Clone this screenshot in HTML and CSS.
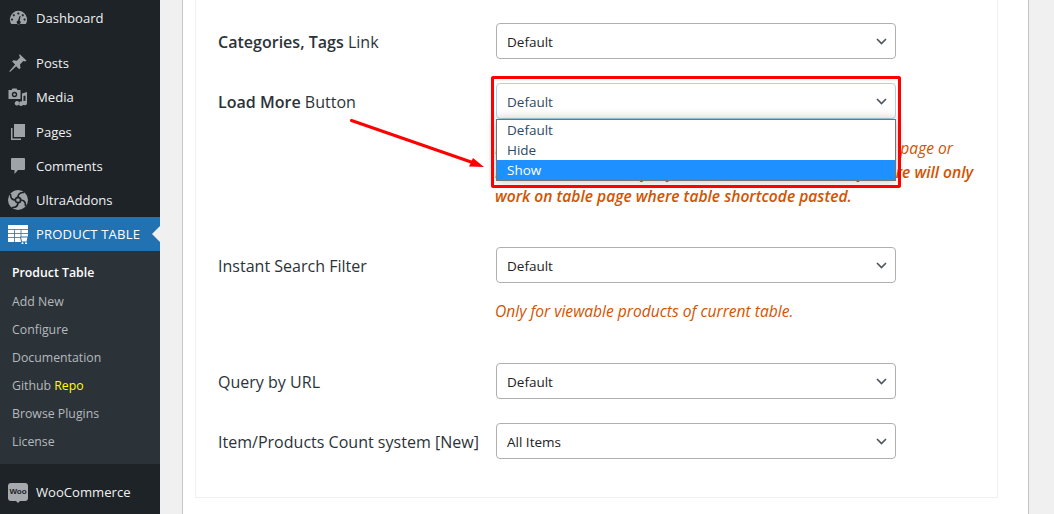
FILE: index.html
```html
<!DOCTYPE html>
<html lang="en">
<head>
<meta charset="utf-8">
<title>Product Table</title>
<link rel="stylesheet" href="styles.css">
</head>
<body>
<div class="app">
  <nav class="sidebar">
    <a class="item first"><svg class="ico" viewBox="0 0 20 20"><path fill-rule="evenodd" d="M3.200 16A8.600 8.600 0 1 1 17.800 16zM10.300 4.500a1 1 0 1 0 .01 0zM5.800 6.200a1 1 0 1 0 .01 0zM14.800 6.200a1 1 0 1 0 .01 0zM4 10.500a1 1 0 1 0 .01 0zM16.600 10.500a1 1 0 1 0 .01 0zM11.700 7.800l.9.3-.9 4.700a1.900 1.900 0 1 1-1.700-.2z"/></svg><span>Dashboard</span></a>
    <a class="item gap"><svg class="ico" viewBox="0 0 20 20"><path d="M11.500 1l7 6.500-1.300 1-1.900-.5-3.300 3.500.5 3.500-1.300 1.300-3-3L2 19l-.7-.7 5.800-6.800-3-3L5.400 7.200l3.400.5L12 4.500l-.8-2z"/></svg><span>Posts</span></a>
    <a class="item"><svg class="ico" viewBox="0 0 20 20"><path fill-rule="evenodd" d="M.5 3h3l1-1.500h4L9.500 3h3v9H.5zM6.500 4.800a2.700 2.700 0 1 0 0 5.400 2.700 2.700 0 0 0 0-5.400z"/><circle cx="6.500" cy="7.500" r="1.200"/><path d="M14 6.500l5-1.500v11a2.200 2.200 0 1 1-1.500-2V8.500l-2 .6v7.400a2.300 2.300 0 1 1-1.500-2zM9 14a2.300 2.300 0 1 0 .01 0z"/></svg><span>Media</span></a>
    <a class="item"><svg class="ico" viewBox="0 0 20 20"><path d="M6 2h11v13H6z"/><path d="M3 6h1.500v10.500H13V18H3z"/></svg><span>Pages</span></a>
    <a class="item"><svg class="ico" viewBox="0 0 20 20"><path d="M4 2h12a1 1 0 0 1 1 1v10a1 1 0 0 1-1 1h-6l-3.500 4v-4H4a1 1 0 0 1-1-1V3a1 1 0 0 1 1-1z"/></svg><span>Comments</span></a>
    <a class="item"><svg class="ico" viewBox="0 0 20 20"><circle cx="10" cy="10" r="10" fill="#9ea3a8"/><g fill="none" stroke="#1d2327" stroke-width="1.700" stroke-linecap="round"><path d="M10 7.500C10 4.500 12 2.500 15.500 2.500"/><path d="M12.500 10C15.500 10 17.500 12 17.500 15.500"/><path d="M10 12.500C10 15.500 8 17.500 4.500 17.500"/><path d="M7.500 10C4.500 10 2.500 8 2.500 4.500"/><circle cx="10" cy="10" r="2.700"/></g></svg><span>UltraAddons</span></a>
    <a class="item current"><svg class="ico" viewBox="0 0 20 20"><path class="tbl" d="M0 1h20v13h-6V18H0z"/><path class="tbl-lines" d="M0 5.500h20M0 9.500h20M0 13.500h14M6.500 5.500V18M13 5.500v8"/><path class="cart" d="M12.500 13h7.500l-1 5h-5.500z"/><circle class="wheel" cx="14.500" cy="19.300" r="1"/><circle class="wheel" cx="18" cy="19.300" r="1"/></svg><span class="caps">PRODUCT TABLE</span><i class="caret"></i></a>
    <div class="submenu">
      <a class="sub on">Product Table</a>
      <a class="sub">Add New</a>
      <a class="sub">Configure</a>
      <a class="sub">Documentation</a>
      <a class="sub">Github <span class="yellow">Repo</span></a>
      <a class="sub">Browse Plugins</a>
      <a class="sub">License</a>
    </div>
    <a class="item woo"><span class="woo-badge">Woo</span><span>WooCommerce</span></a>
  </nav>
  <main class="main">
    <div class="panel">
      <section class="card">
        <div class="row">
          <label class="label"><b>Categories, Tags</b> Link</label>
          <div class="field"><div class="select">Default<svg class="chev" viewBox="0 0 11 7"><path d="M1 1l4.500 4.500L10 1"/></svg></div></div>
        </div>
        <div class="row tall-a">
          <label class="label"><b>Load More</b> Button</label>
          <div class="field">
            <div class="select active">Default<svg class="chev" viewBox="0 0 11 7"><path d="M1 1l4.500 4.500L10 1"/></svg></div>
            <p class="note">Load More button will be shown at the bottom of the table page or<br><strong>Load More uses an Ajax feature, so this Load More feature will only<br>work on table page where table shortcode pasted.</strong></p>
          </div>
        </div>
        <div class="row tall-b">
          <label class="label">Instant Search Filter</label>
          <div class="field">
            <div class="select">Default<svg class="chev" viewBox="0 0 11 7"><path d="M1 1l4.500 4.500L10 1"/></svg></div>
            <p class="note">Only for viewable products of current table.</p>
          </div>
        </div>
        <div class="row">
          <label class="label">Query by URL</label>
          <div class="field"><div class="select">Default<svg class="chev" viewBox="0 0 11 7"><path d="M1 1l4.500 4.500L10 1"/></svg></div></div>
        </div>
        <div class="row">
          <label class="label">Item/Products Count system [New]</label>
          <div class="field"><div class="select">All Items<svg class="chev" viewBox="0 0 11 7"><path d="M1 1l4.500 4.500L10 1"/></svg></div></div>
        </div>
      </section>
    </div>
  </main>
</div>
<ul class="dropdown">
  <li>Default</li>
  <li>Hide</li>
  <li class="hl">Show</li>
</ul>
<div class="redbox"></div>
<svg class="arrow" viewBox="0 0 150 60"><path d="M1.500 1.500L124 44" stroke="#f00" stroke-width="3" stroke-linecap="round"/><path d="M134 48l-11-9-4 8.500z" fill="#f00"/></svg>
</body>
</html>
```
FILE: styles.css
```css
* { box-sizing: border-box; }
html, body { margin: 0; height: 514px; overflow: hidden; }
body { position: relative; background: #f0f0f1; font-family: "Open Sans", "Liberation Sans", sans-serif; }
.app { display: flex; height: 514px; }
.sidebar { width: 160px; flex: none; background: #1d2327; padding-top: 1px; }
.item { display: flex; align-items: center; height: 34.250px; padding-left: 8px; color: #f0f0f1; font-size: 13.100px; gap: 8px; position: relative; }
.item.gap { margin-top: 10.750px; }
.ico { width: 20px; height: 20px; fill: #9ea3a8; flex: none; }
.current { background: #2271b1; color: #fff; height: 34px; }
.caps { letter-spacing: .15px; }
.tbl { fill: #fff; }
.tbl-lines { fill: none; stroke: #2271b1; stroke-width: .8; }
.cart { fill: #fff; stroke: #2271b1; stroke-width: 1; }
.current .wheel { fill: #fff; }
.caret { position: absolute; right: 0; top: 9px; border: 8px solid transparent; border-right-color: #f0f0f1; border-left: 0; }
.submenu { background: #2c3338; height: 213px; padding-top: 8px; }
.sub { display: block; height: 28px; line-height: 28px; padding-left: 12px; font-size: 12.300px; color: #b4b9be; }
.sub.on { color: #fff; font-weight: 600; height: 29px; }
.yellow { color: #ff0; }
.woo { margin-top: 11px; }
.woo-badge { position: relative; width: 20px; height: 18px; background: #a7aaad; border-radius: 3px; color: #1d2327; font-family: "Liberation Sans", sans-serif; font-size: 8px; font-weight: 700; text-align: center; line-height: 18px; flex: none; }
.woo-badge::after { content: ""; position: absolute; left: 8px; top: 18px; border: 2px solid transparent; border-top-color: #a7aaad; }
.main { flex: 1; padding-left: 22px; padding-right: 25px; }
.panel { height: 100%; background: #fff; border-left: 1px solid #c3c4c7; border-right: 1px solid #c3c4c7; padding: 0 30px 0 12px; }
.card { height: 498px; border: 1px solid #f0f0f1; border-top: 0; padding: 23px 0 0 22px; }
.row { display: flex; align-items: flex-start; margin-bottom: 24px; }
.tall-a { height: 140px; }
.tall-b { height: 92px; }
.label { width: 278px; height: 36px; flex: none; line-height: 36px; padding-top: 1px; font-size: 16.050px; color: #2c3338; white-space: nowrap; }
.label b { font-weight: 600; }
.field { width: 400px; }
.select { height: 36px; border: 1px solid #b0b0b0; border-radius: 4px; padding: 2px 8px 0 10px; font-size: 13.500px; color: #222; display: flex; justify-content: space-between; align-items: center; background: #fff; }
.select.active { border-color: #a8d4e6; color: #2c4a66; }
.chev { width: 11px; height: 7px; margin-bottom: 2px; fill: none; stroke: #50575e; stroke-width: 1.700; }
.note { margin: 16px 0 0 -1px; font-size: 15.600px; line-height: 24px; font-style: italic; color: #d35400; white-space: nowrap; }
.tall-a .note { margin-top: 17px; }
.note strong { font-weight: 600; }
.dropdown { position: absolute; left: 496px; top: 119px; width: 400px; height: 62px; margin: 0; padding: 0; list-style: none; background: #fff; border: 1px solid #767676; box-shadow: 0 0 10px rgba(0,0,0,.25); font-size: 13.500px; color: #2c4a66; }
.dropdown li { height: 20px; line-height: 20px; padding-left: 10px; }
.dropdown .hl { background: #1e90ff; color: #fff; }
.redbox { position: absolute; left: 491px; top: 76px; width: 410px; height: 112px; border: 3px solid #f00; border-radius: 2px; }
.arrow { position: absolute; left: 350px; top: 119px; width: 150px; height: 60px; }
```
